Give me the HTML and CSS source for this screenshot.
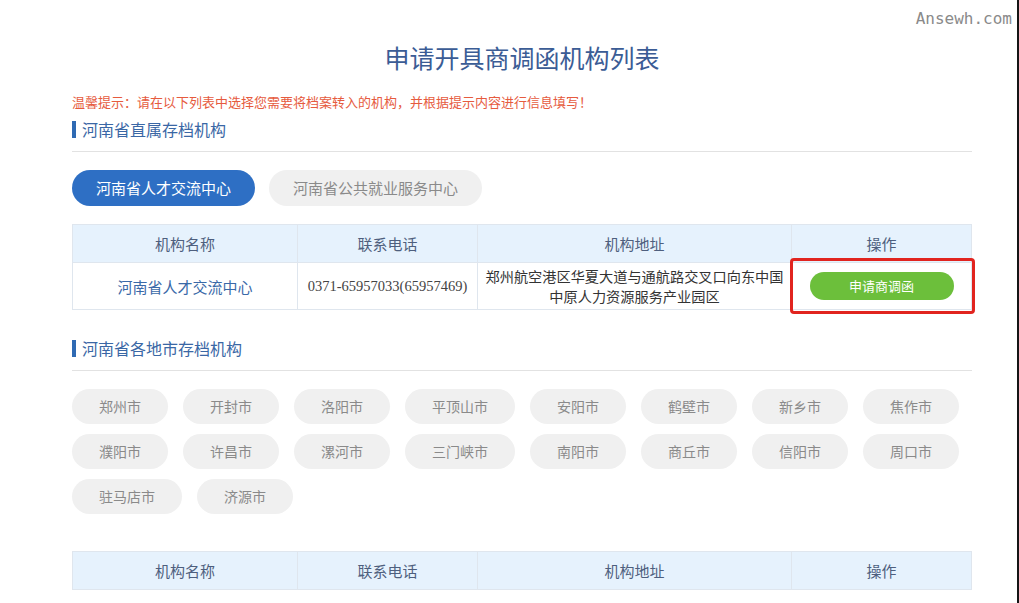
FILE: index.html
```html
<!DOCTYPE html>
<html>
<head>
    <meta charset="utf-8">
    <title>申请开具商调函机构列表</title>
    <link rel="stylesheet" href="styles.css">
</head>
<body>
    <div class="site-mark">Ansewh.com</div>

    <div class="wrap">
        <h1 class="page-title">申请开具商调函机构列表</h1>
        <p class="tip">温馨提示：请在以下列表中选择您需要将档案转入的机构，并根据提示内容进行信息填写！</p>

        <h2 class="sec-title"><span class="bar"></span>河南省直属存档机构</h2>
        <div class="tabs">
            <a class="tab active" href="#">河南省人才交流中心</a>
            <a class="tab" href="#">河南省公共就业服务中心</a>
        </div>

        <table class="org-table">
            <thead>
                <tr>
                    <th class="c-name">机构名称</th>
                    <th class="c-tel">联系电话</th>
                    <th class="c-addr">机构地址</th>
                    <th>操作</th>
                </tr>
            </thead>
            <tbody>
                <tr>
                    <td class="org-name">河南省人才交流中心</td>
                    <td class="org-tel">0371-65957033(65957469)</td>
                    <td class="org-addr">郑州航空港区华夏大道与通航路交叉口向东中国<br>中原人力资源服务产业园区</td>
                    <td class="org-op">
                        <a class="apply-btn" href="#">申请商调函</a>
                        <span class="mark-box"></span>
                    </td>
                </tr>
            </tbody>
        </table>

        <h2 class="sec-title sec-city"><span class="bar"></span>河南省各地市存档机构</h2>
        <div class="cities">
            <a class="city" href="#">郑州市</a>
            <a class="city" href="#">开封市</a>
            <a class="city" href="#">洛阳市</a>
            <a class="city" href="#">平顶山市</a>
            <a class="city" href="#">安阳市</a>
            <a class="city" href="#">鹤壁市</a>
            <a class="city" href="#">新乡市</a>
            <a class="city" href="#">焦作市</a>
            <a class="city" href="#">濮阳市</a>
            <a class="city" href="#">许昌市</a>
            <a class="city" href="#">漯河市</a>
            <a class="city" href="#">三门峡市</a>
            <a class="city" href="#">南阳市</a>
            <a class="city" href="#">商丘市</a>
            <a class="city" href="#">信阳市</a>
            <a class="city" href="#">周口市</a>
            <a class="city" href="#">驻马店市</a>
            <a class="city" href="#">济源市</a>
        </div>

        <table class="org-table city-table">
            <thead>
                <tr>
                    <th class="c-name">机构名称</th>
                    <th class="c-tel">联系电话</th>
                    <th class="c-addr">机构地址</th>
                    <th>操作</th>
                </tr>
            </thead>
        </table>
    </div>
</body>
</html>
```

FILE: styles.css
```css
body {
    font-family: "Noto Sans CJK SC", "Noto Sans", sans-serif;
    margin: 0;
    padding: 0;
    background: #fff;
    color: #333;
}

/* dark strip on the right edge of the window */
body::after {
    content: "";
    position: fixed;
    top: 0;
    right: 0;
    bottom: 0;
    width: 2px;
    background: #151515;
}

a {
    text-decoration: none;
}

.site-mark {
    position: absolute;
    top: 8px;
    right: 7px;
    font-family: "DejaVu Sans Mono", monospace;
    font-size: 16px;
    line-height: 22px;
    color: #8a8a8a;
}

.wrap {
    width: 900px;
    margin-left: 72px;
    padding-top: 39px;
}

.page-title {
    margin: 0;
    text-align: center;
    font-size: 25px;
    font-weight: normal;
    line-height: 36px;
    color: #3b5c95;
}

.tip {
    margin: 17px 0 0;
    font-size: 13px;
    line-height: 20px;
    color: #e65b3e;
}

.sec-title {
    display: flex;
    align-items: center;
    margin: 5px 0 0;
    padding-bottom: 10px;
    border-bottom: 1px solid #e2e2e2;
    font-size: 16px;
    font-weight: normal;
    line-height: 24px;
    color: #3a67a5;
}

.sec-title .bar {
    width: 4px;
    height: 17px;
    margin-right: 6px;
    background: #2f6ab3;
}

.sec-city {
    margin-top: 26px;
}

.tabs {
    display: flex;
    gap: 14px;
    margin-top: 18px;
}

.tab {
    height: 36px;
    line-height: 36px;
    padding: 0 24px;
    border-radius: 18px;
    font-size: 15px;
    background: #f0f0f0;
    color: #8a8a8a;
}

.tab.active {
    background: #2e6fc4;
    color: #fff;
}

.org-table {
    width: 900px;
    margin-top: 18px;
    border-collapse: collapse;
    table-layout: fixed;
}

.org-table th,
.org-table td {
    border: 1px solid #dfe6ee;
    text-align: center;
    padding: 0;
}

.org-table th {
    height: 37px;
    background: #e6f2fd;
    font-size: 15px;
    font-weight: normal;
    color: #4e5f7e;
}

.c-name { width: 224px; }
.c-tel { width: 179px; }
.c-addr { width: 313px; }

.org-table td {
    height: 46px;
    font-size: 15px;
}

.org-name {
    color: #3a69a8;
}

.org-tel {
    font-family: "Liberation Serif", serif;
    font-size: 14.5px !important;
    color: #444;
}

.org-addr {
    line-height: 20px;
    font-size: 14.2px !important;
    color: #333;
    white-space: nowrap;
}

.org-op {
    position: relative;
}

.apply-btn {
    display: inline-block;
    width: 144px;
    height: 28px;
    line-height: 28px;
    border-radius: 14px;
    background: #6cbf3b;
    color: #fff;
    font-size: 13px;
}

/* red highlight frame drawn over the action cell */
.mark-box {
    position: absolute;
    left: -2px;
    top: -5px;
    width: 179px;
    height: 50px;
    border: 3px solid #e1241f;
    border-radius: 4px;
}

.cities {
    display: flex;
    flex-wrap: wrap;
    gap: 10px 15px;
    margin-top: 18px;
}

.city {
    height: 35px;
    line-height: 35px;
    padding: 0 27px;
    border-radius: 18px;
    background: #f0f0f0;
    color: #8a8a8a;
    font-size: 14px;
}

.city-table {
    margin-top: 37px;
}
```
